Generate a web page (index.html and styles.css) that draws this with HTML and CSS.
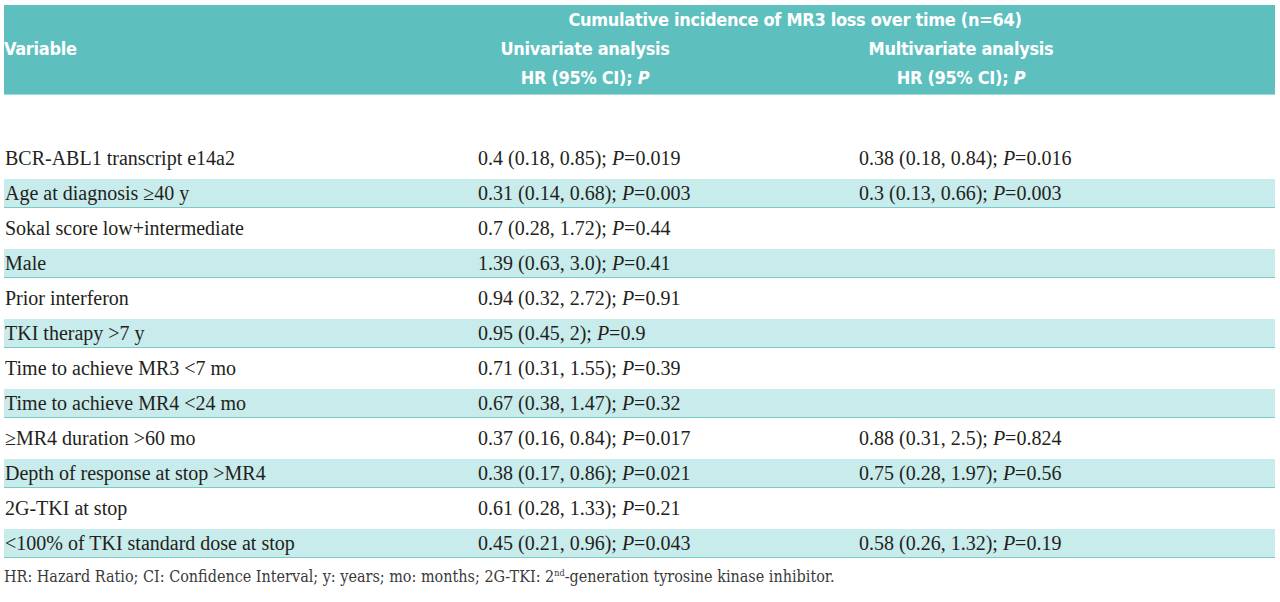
FILE: index.html
```html
<!DOCTYPE html>
<html lang="en">
<head>
<meta charset="utf-8">
<title>Cumulative incidence of MR3 loss</title>
<link rel="stylesheet" href="styles.css">
</head>
<body>
<div class="page">
  <div class="table">
    <div class="thead">
      <div class="th-span">Cumulative incidence of MR3 loss over time (n=64)</div>
      <div class="th-var">Variable</div>
      <div class="th-uni">Univariate analysis<br>HR (95% CI); <i>P</i></div>
      <div class="th-multi">Multivariate analysis<br>HR (95% CI); <i>P</i></div>
    </div>
    <div class="tbody">
      <div class="row"><div class="c-var">BCR-ABL1 transcript e14a2</div><div class="c-uni">0.4 (0.18, 0.85); <i>P</i>=0.019</div><div class="c-multi">0.38 (0.18, 0.84); <i>P</i>=0.016</div></div>
      <div class="row shaded"><div class="c-var">Age at diagnosis ≥40 y</div><div class="c-uni">0.31 (0.14, 0.68); <i>P</i>=0.003</div><div class="c-multi">0.3 (0.13, 0.66); <i>P</i>=0.003</div></div>
      <div class="row"><div class="c-var">Sokal score low+intermediate</div><div class="c-uni">0.7 (0.28, 1.72); <i>P</i>=0.44</div><div class="c-multi"></div></div>
      <div class="row shaded"><div class="c-var">Male</div><div class="c-uni">1.39 (0.63, 3.0); <i>P</i>=0.41</div><div class="c-multi"></div></div>
      <div class="row"><div class="c-var">Prior interferon</div><div class="c-uni">0.94 (0.32, 2.72); <i>P</i>=0.91</div><div class="c-multi"></div></div>
      <div class="row shaded"><div class="c-var">TKI therapy &gt;7 y</div><div class="c-uni">0.95 (0.45, 2); <i>P</i>=0.9</div><div class="c-multi"></div></div>
      <div class="row"><div class="c-var">Time to achieve MR3 &lt;7 mo</div><div class="c-uni">0.71 (0.31, 1.55); <i>P</i>=0.39</div><div class="c-multi"></div></div>
      <div class="row shaded"><div class="c-var">Time to achieve MR4 &lt;24 mo</div><div class="c-uni">0.67 (0.38, 1.47); <i>P</i>=0.32</div><div class="c-multi"></div></div>
      <div class="row"><div class="c-var">≥MR4 duration &gt;60 mo</div><div class="c-uni">0.37 (0.16, 0.84); <i>P</i>=0.017</div><div class="c-multi">0.88 (0.31, 2.5); <i>P</i>=0.824</div></div>
      <div class="row shaded"><div class="c-var">Depth of response at stop &gt;MR4</div><div class="c-uni">0.38 (0.17, 0.86); <i>P</i>=0.021</div><div class="c-multi">0.75 (0.28, 1.97); <i>P</i>=0.56</div></div>
      <div class="row"><div class="c-var">2G-TKI at stop</div><div class="c-uni">0.61 (0.28, 1.33); <i>P</i>=0.21</div><div class="c-multi"></div></div>
      <div class="row shaded"><div class="c-var">&lt;100% of TKI standard dose at stop</div><div class="c-uni">0.45 (0.21, 0.96); <i>P</i>=0.043</div><div class="c-multi">0.58 (0.26, 1.32); <i>P</i>=0.19</div></div>
    </div>
  </div>
  <p class="note">HR: Hazard Ratio; CI: Confidence Interval; y: years; mo: months; 2G-TKI: 2<sup>nd</sup>-generation tyrosine kinase inhibitor.</p>
</div>
</body>
</html>
```
FILE: styles.css
```css
html, body {
  margin: 0;
  padding: 0;
  background: #ffffff;
}

.page {
  padding: 5px 5px 0 4px;
}

.table {
  width: 1271px;
}

.thead {
  display: grid;
  grid-template-columns: 415px 332px 420px 1fr;
  grid-template-rows: 28px 29px 29px;
  padding: 1px 0 2px;
  background: #5ebfbf;
  border-bottom: 1px solid #a3d9d9;
  color: #ffffff;
  font-family: "Liberation Sans Narrow", "DejaVu Sans Condensed", "Liberation Sans", sans-serif;
  font-weight: bold;
  font-size: 18px;
  letter-spacing: -0.3px;
  line-height: 29px;
}

.thead i {
  font-style: italic;
}

.th-span {
  grid-column: 2 / 4;
  grid-row: 1;
  text-align: center;
  line-height: 28px;
}

.th-var {
  grid-column: 1;
  grid-row: 2;
}

.th-uni {
  grid-column: 2;
  grid-row: 2 / 4;
  text-align: center;
}

.th-multi {
  grid-column: 3;
  grid-row: 2 / 4;
  text-align: center;
}

.tbody {
  display: flex;
  flex-direction: column;
  padding-top: 46px;
  font-family: "Liberation Serif", "Times New Roman", serif;
  font-size: 20px;
  color: #231f20;
}

.row {
  display: grid;
  grid-template-columns: 474px 381px 1fr;
  height: 28px;
  line-height: 28px;
  margin: 3px 0;
  border-bottom: 1px solid transparent;
  white-space: nowrap;
}

.row.shaded {
  background: #c8ebeb;
  border-bottom-color: #7ccbcb;
}

.c-var {
  padding-left: 1px;
}

.note {
  margin: 6px 0 0;
  font-family: "DejaVu Serif Condensed", "DejaVu Serif", "Liberation Serif", serif;
  font-size: 16px;
  line-height: 20px;
  color: #3a3a3a;
}

.note sup {
  font-size: 9px;
  line-height: 0;
  vertical-align: 6px;
}
```
